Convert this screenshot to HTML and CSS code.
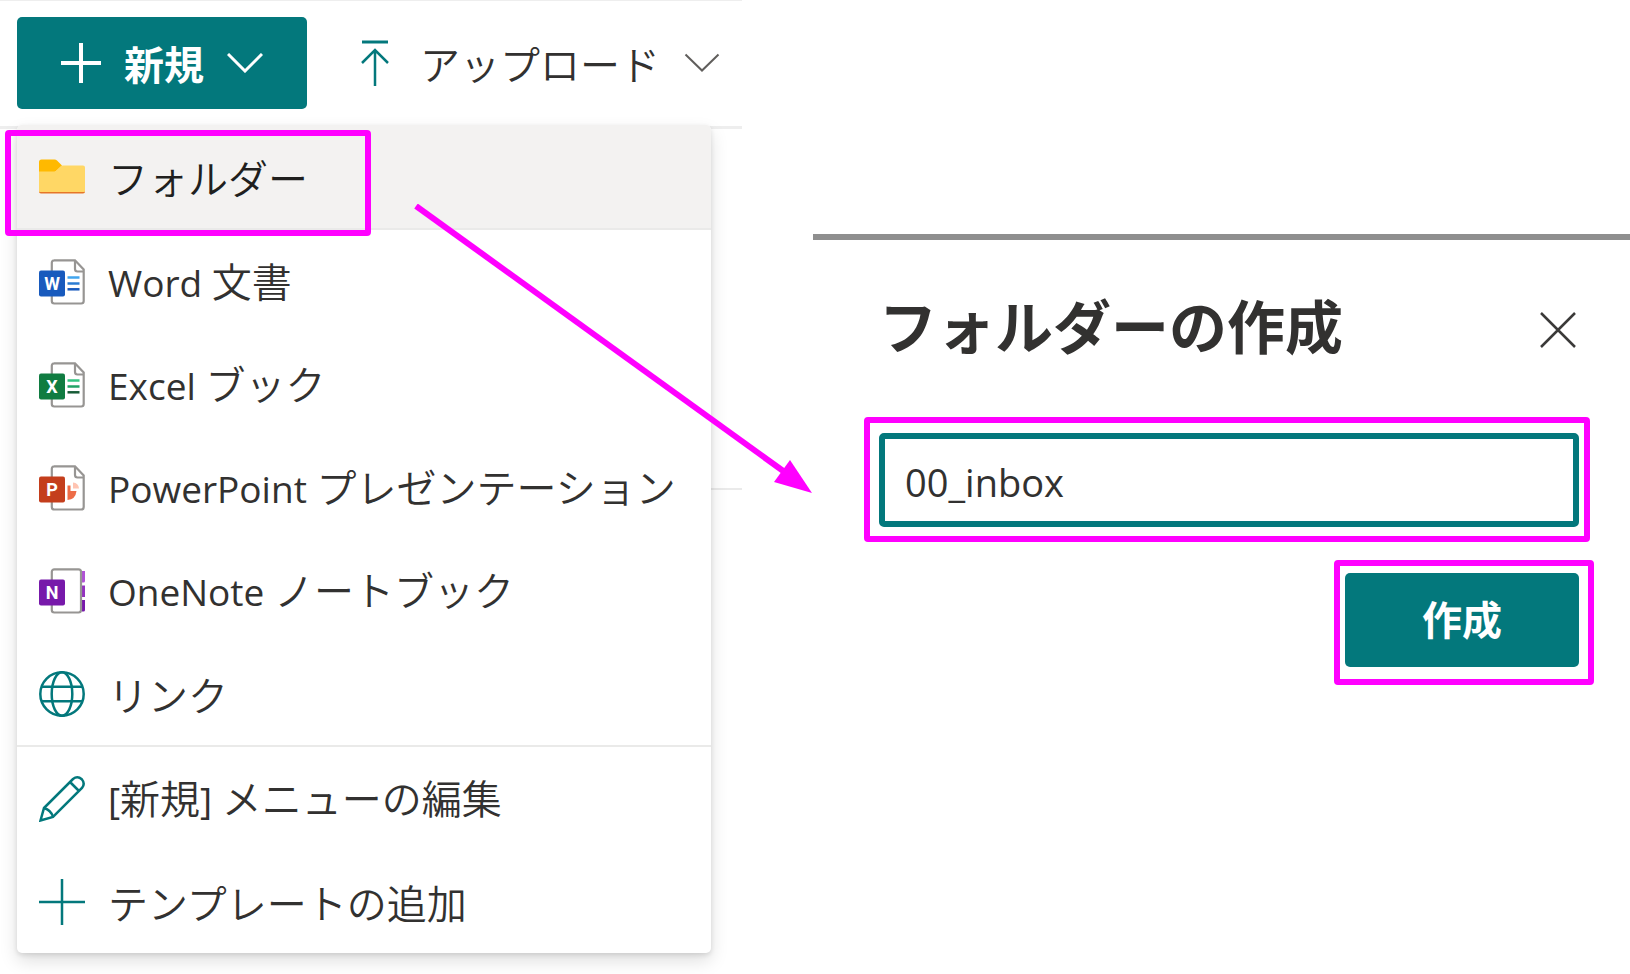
FILE: index.html
```html
<!DOCTYPE html>
<html lang="ja">
<head>
<meta charset="utf-8">
<meta name="viewport" content="width=device-width, initial-scale=1">
<title>フォルダーの作成</title>
<link rel="stylesheet" href="styles.css">
</head>
<body>
<main class="page">
  <section class="library">
    <div class="command-bar">
      <button class="btn btn-primary btn-new" type="button" aria-expanded="true">
        <svg class="icon-plus" viewBox="0 0 40 40" aria-hidden="true"><path d="M20 0V40M0 20H40"/></svg>
        <span>新規</span>
        <svg class="icon-chevron" viewBox="0 0 36 20" aria-hidden="true"><path d="M1 1L18 18L35 1"/></svg>
      </button>
      <button class="btn btn-upload" type="button">
        <svg class="icon-upload" viewBox="0 0 28 46" aria-hidden="true"><path d="M1 2H27" stroke-width="3"/><path d="M14 46V10M1 23L14 10L27 23" stroke-width="2.5"/></svg>
        <span>アップロード</span>
        <svg class="icon-chevron" viewBox="0 0 36 20" aria-hidden="true"><path d="M1.500 1.500L18 17.500L34.500 1.500"/></svg>
      </button>
    </div>
    <div class="content">
      <div class="list-header"></div>
      <ul class="menu" role="menu">
        <li class="marked" role="none">
          <button class="menu-item is-active" type="button" role="menuitem">
            <svg class="icon" viewBox="0 0 46 46" aria-hidden="true"><path d="M0 38.500V8Q0 5.500 2.500 5.500H15.500Q17 5.500 18 6.500L23 11.500L16 18H0Z" fill="#ffb900"/><path d="M0 17.500H15Q16.500 17.500 17.500 16.500L21.500 12.500Q22.500 11.500 24 11.500H44Q46 11.500 46 13.500V37Q46 39 44 39H2Q0 39 0 37Z" fill="#ffd765"/><path d="M0 37.500Q0 39.500 2 39.500H44Q46 39.500 46 37.500L45 38H1Z" fill="#e67628"/></svg>
            <span>フォルダー</span>
          </button>
        </li>
        <li class="separator" role="separator"></li>
        <li role="none">
          <button class="menu-item" type="button" role="menuitem">
            <svg class="icon" viewBox="0 0 46 46" aria-hidden="true"><path class="sheet" d="M15 1.300H36L44.700 10.500V42Q44.700 44.500 42.200 44.500H15.300Q12.800 44.500 12.800 42V3.800Q12.800 1.300 15.300 1.300M36 1.300V10Q36 12.500 38.500 12.500H44.700"/><path d="M28.500 18.500H40.500" stroke="#41a5ee" stroke-width="2.500"/><path d="M28.500 24.500H40.500" stroke="#2b7cd3" stroke-width="2.500"/><path d="M28.500 30.300H40.500" stroke="#185abd" stroke-width="2.500"/><rect y="11.500" width="26" height="26" rx="2" fill="#185abd"/><text class="letter" x="13" y="31">W</text></svg>
            <span><span class="latin">Word </span>文書</span>
          </button>
        </li>
        <li role="none">
          <button class="menu-item" type="button" role="menuitem">
            <svg class="icon" viewBox="0 0 46 46" aria-hidden="true"><path class="sheet" d="M15 1.300H36L44.700 10.500V42Q44.700 44.500 42.200 44.500H15.300Q12.800 44.500 12.800 42V3.800Q12.800 1.300 15.300 1.300M36 1.300V10Q36 12.500 38.500 12.500H44.700"/><path d="M28.500 18.500H40.500" stroke="#33c481" stroke-width="2.500"/><path d="M28.500 24.500H40.500" stroke="#21a366" stroke-width="2.500"/><path d="M28.500 30.300H40.500" stroke="#185c37" stroke-width="2.500"/><rect y="11.500" width="26" height="26" rx="2" fill="#107c41"/><text class="letter" x="13" y="31">X</text></svg>
            <span><span class="latin">Excel </span>ブック</span>
          </button>
        </li>
        <li role="none">
          <button class="menu-item" type="button" role="menuitem">
            <svg class="icon" viewBox="0 0 46 46" aria-hidden="true"><path class="sheet" d="M15 1.300H36L44.700 10.500V42Q44.700 44.500 42.200 44.500H15.300Q12.800 44.500 12.800 42V3.800Q12.800 1.300 15.300 1.300M36 1.300V10Q36 12.500 38.500 12.500H44.700"/><path d="M28.500 20.500L31.500 20.500V26H37.500Q36.500 34.500 28.500 35Z" fill="#ed6c47"/><path d="M34 17.500V23.500H40Q39.500 18 34 17.500Z" fill="#ffc4b2"/><rect y="11.500" width="26" height="26" rx="2" fill="#c43e1c"/><text class="letter" x="13" y="31">P</text></svg>
            <span><span class="latin">PowerPoint </span>プレゼンテーション</span>
          </button>
        </li>
        <li role="none">
          <button class="menu-item" type="button" role="menuitem">
            <svg class="icon" viewBox="0 0 46 46" aria-hidden="true"><path d="M43 3H46V13Q46 14.500 44.500 14.500H43Z" fill="#b052d6"/><path d="M43 17.500H46V29H43Z" fill="#9332bf"/><path d="M43 32H46V42Q46 43.500 44.500 43.500H43Z" fill="#7719aa"/><rect class="sheet" x="12.800" y="1.300" width="29.200" height="43.200" rx="2.500"/><rect y="11.500" width="26" height="26" rx="2" fill="#7719aa"/><text class="letter" x="13" y="31">N</text></svg>
            <span><span class="latin">OneNote </span>ノートブック</span>
          </button>
        </li>
        <li role="none">
          <button class="menu-item" type="button" role="menuitem">
            <svg class="icon icon-line" viewBox="0 0 46 46" aria-hidden="true"><circle cx="23" cy="23" r="21.700"/><ellipse cx="23" cy="23" rx="10.300" ry="21.700"/><path d="M2.500 15.700H43.500M2.500 30.300H43.500"/></svg>
            <span>リンク</span>
          </button>
        </li>
        <li class="separator" role="separator"></li>
        <li role="none">
          <button class="menu-item" type="button" role="menuitem">
            <svg class="icon icon-line" viewBox="0 0 46 46" aria-hidden="true"><path d="M1.500 44.500L5 32L34 3Q38.500 -0.500 42.800 3.200Q46.500 7.500 43 12L14 41ZM5 32Q12 34 14 41M31 6L40 15"/></svg>
            <span><span class="latin">[</span>新規<span class="latin">] </span>メニューの編集</span>
          </button>
        </li>
        <li role="none">
          <button class="menu-item" type="button" role="menuitem">
            <svg class="icon icon-line" viewBox="0 0 46 46" aria-hidden="true"><path d="M23 0V46M0 23H46"/></svg>
            <span>テンプレートの追加</span>
          </button>
        </li>
      </ul>
    </div>
  </section>

  <section class="dialog" role="dialog" aria-labelledby="dialog-title">
    <header class="dialog-header">
      <h1 class="dialog-title" id="dialog-title">フォルダーの作成</h1>
      <button class="btn btn-close" type="button" aria-label="閉じる">
        <svg class="icon-close" viewBox="0 0 36 36" aria-hidden="true"><path d="M1 1L35 35M35 1L1 35"/></svg>
      </button>
    </header>
    <form class="dialog-form">
      <div class="field marked">
        <input class="text-input" type="text" value="00_inbox" aria-label="フォルダー名">
      </div>
      <div class="submit marked">
        <button class="btn btn-primary btn-create" type="button">作成</button>
      </div>
    </form>
  </section>

  <svg class="arrow" viewBox="0 0 400 292" aria-hidden="true"><path d="M2 2L372 269" stroke="#f0f" stroke-width="6"/><path d="M398 289L376 256L360 278Z" fill="#f0f"/></svg>
</main>
</body>
</html>
```
FILE: styles.css
```css
*,
*::after {
  box-sizing: border-box;
}

body {
  margin: 0;
  background: #fff;
  color: #323130;
  font-family: "Open Sans", "Noto Sans CJK JP", sans-serif;
  font-size: 40px;
  line-height: 56px;
}

svg {
  flex: none;
  fill: none;
}

.page {
  position: relative;
  display: grid;
  grid-template-columns: 742fr 817fr;
  column-gap: 71px;
  min-height: 100vh;
}

.btn {
  display: flex;
  align-items: center;
  justify-content: center;
  margin: 0;
  padding: 0;
  border: 0;
  background: none;
  color: inherit;
  font: inherit;
  font-family: "Noto Sans CJK JP", sans-serif;
  white-space: nowrap;
}

.btn-primary {
  padding-bottom: 4px;
  border-radius: 5px;
  background: #03787c;
  color: #fff;
  font-weight: 700;
}

/* Command bar */

.library {
  min-width: 0;
}

.command-bar {
  display: flex;
  gap: 54px;
  padding: 16px 16px 17px 17px;
  border-top: 1px solid #eee;
  border-bottom: 3px solid #eee;
}

.btn-new {
  gap: 23px;
  height: 92px;
  padding: 0 44px;
}

.btn-upload {
  gap: 24px;
  font-family: "Noto Sans CJK JP DemiLight", "Noto Sans CJK JP", sans-serif;
  font-weight: 350;
}

.btn-upload span {
  margin-left: 7px;
}

.icon-plus {
  width: 40px;
  height: 40px;
  stroke: #fff;
  stroke-width: 4;
}

.icon-chevron {
  width: 36px;
  height: 20px;
  stroke: #fff;
  stroke-width: 3;
}

.icon-upload {
  width: 28px;
  height: 46px;
  stroke: #03787c;
}

.btn-upload .icon-chevron {
  stroke: #605e5c;
  stroke-width: 2;
}

/* Drop-down menu */

.content {
  position: relative;
}

.list-header {
  height: 361px;
  margin-left: 32px;
  border-bottom: 2px solid #eaeaea;
}

.menu {
  position: absolute;
  top: -4px;
  right: 31px;
  left: 17px;
  margin: 0;
  padding: 0;
  border-radius: 5px;
  background: #fff;
  box-shadow: 0 8px 18px rgba(0, 0, 0, 0.13), 0 2px 5px rgba(0, 0, 0, 0.11);
  list-style: none;
}

.menu-item {
  display: flex;
  align-items: center;
  gap: 23px;
  width: 100%;
  height: 103px;
  margin: 0;
  padding: 0 22px;
  border: 0;
  background: none;
  color: inherit;
  font: inherit;
  font-family: "Noto Sans CJK JP DemiLight", "Noto Sans CJK JP", sans-serif;
  font-weight: 350;
  text-align: left;
  white-space: nowrap;
}

.menu-item.is-active {
  border-radius: 5px 5px 0 0;
  background: #f3f2f1;
  color: #201f1e;
}

.latin {
  font-family: "Open Sans", sans-serif;
  font-size: 37px;
  font-weight: 400;
  white-space: pre;
}

.separator {
  height: 2px;
  background: #eaeae9;
}

.icon {
  width: 46px;
  height: 46px;
}

.icon-line {
  stroke: #03787c;
  stroke-width: 2.5;
}

.sheet {
  stroke: #979593;
  stroke-width: 2.2;
}

.letter {
  fill: #fff;
  font-family: Roboto, sans-serif;
  font-size: 18px;
  font-weight: 700;
  text-anchor: middle;
}

/* Dialog */

.dialog {
  align-self: start;
  min-width: 0;
  margin-top: 234px;
  padding: 42px 51px 32px 66px;
  border-top: 6px solid #8f8f8f;
}

.dialog-header {
  display: flex;
  align-items: center;
  justify-content: space-between;
}

.dialog-title {
  margin: 0;
  font-family: "Noto Sans CJK JP", sans-serif;
  font-size: 58px;
  font-weight: 700;
  line-height: 84px;
}

.btn-close {
  padding: 12px 3px 0;
}

.icon-close {
  width: 36px;
  height: 36px;
  stroke: #3b3a39;
  stroke-width: 2.5;
}

.dialog-form {
  display: flex;
  flex-direction: column;
  gap: 46px;
  margin-top: 67px;
}

.text-input {
  display: block;
  width: 100%;
  height: 94px;
  padding: 4px 20px 0;
  border: 6px solid #03787c;
  border-radius: 5px;
  outline: 0;
  background: #fff;
  color: inherit;
  font: inherit;
  font-size: 38px;
}

.submit {
  align-self: flex-end;
}

.btn-create {
  width: 234px;
  height: 94px;
}

/* Highlight frames and the arrow between them */

.marked {
  position: relative;
}

.marked::after {
  position: absolute;
  border: 6px solid #f0f;
  border-radius: 4px;
  content: "";
  pointer-events: none;
}

.menu .marked::after {
  top: 5px;
  left: -12px;
  width: 366px;
  height: 106px;
}

.field::after {
  inset: -16px -11px -15px -15px;
}

.submit::after {
  inset: -13px -15px -18px -11px;
}

.arrow {
  position: absolute;
  top: 204px;
  left: 414px;
  width: 400px;
  height: 292px;
  pointer-events: none;
}
```
